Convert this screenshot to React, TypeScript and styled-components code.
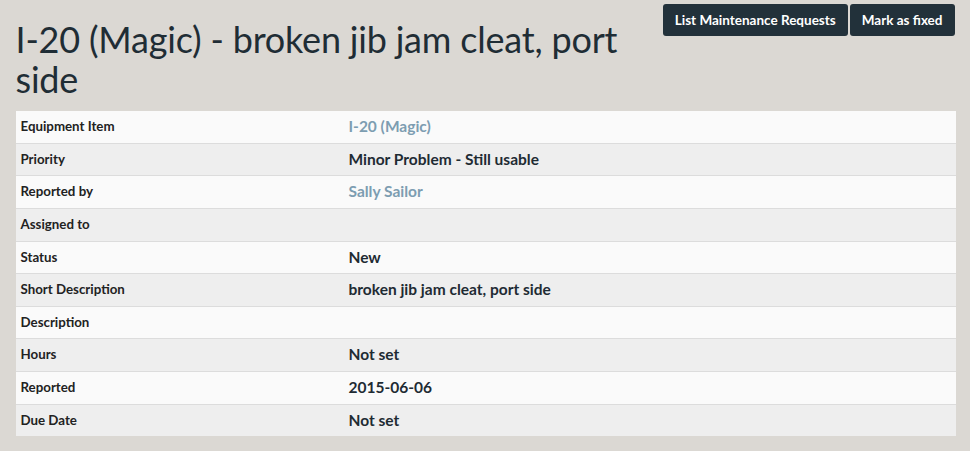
import React from 'react';
import styled, { createGlobalStyle } from 'styled-components';

const GlobalStyle = createGlobalStyle`
  html, body {
    margin: 0;
    padding: 0;
    background: #dbd8d3;
    font-family: Lato, "Liberation Sans", sans-serif;
    color: #1f2d35;
  }
`;

const Container = styled.div`
  width: 940px;
  margin: 0 auto;
  padding-left: 1px;
`;

const Header = styled.div`
  display: flex;
  justify-content: space-between;
  align-items: flex-start;
`;

const Title = styled.h1`
  margin: 20px 0 10px;
  max-width: 620px;
  font-size: 36px;
  line-height: 1.1;
  font-weight: 400;
  letter-spacing: -0.2px;
  color: #1f2d35;
`;

const Actions = styled.div`
  display: flex;
  gap: 2px;
  margin-top: 4px;
  margin-right: 1px;
`;

const Button = styled.button`
  height: 32px;
  padding: 0 12px;
  border: none;
  border-radius: 3px;
  background: #22313a;
  color: #fff;
  font-family: inherit;
  font-size: 13.5px;
  font-weight: 700;
  cursor: pointer;
`;

const Table = styled.table`
  width: 100%;
  border-collapse: collapse;
  margin-top: 2px;
`;

const Row = styled.tr<{ striped?: boolean }>`
  background: ${(props) => (props.striped ? '#eeeeee' : '#fafafa')};
  border-top: 1px solid #dcdcdc;

  &:first-child {
    border-top: none;
  }
`;

const Label = styled.th`
  width: 318px;
  padding: 8px 5px;
  line-height: 15.6px;
  text-align: left;
  vertical-align: middle;
  font-size: 13.3px;
  font-weight: 700;
  color: #222;
`;

const Value = styled.td`
  padding: 8px 5px;
  line-height: 15.6px;
  vertical-align: middle;
  font-size: 15.5px;
  font-weight: 700;
  color: #1e2b33;
`;

const Link = styled.a`
  color: #7d9db1;
  text-decoration: none;
`;

interface IField {
  label: string,
  value?: string,
  link?: boolean
}

const fields: IField[] = [
  { label: 'Equipment Item', value: 'I-20 (Magic)', link: true },
  { label: 'Priority', value: 'Minor Problem - Still usable' },
  { label: 'Reported by', value: 'Sally Sailor', link: true },
  { label: 'Assigned to' },
  { label: 'Status', value: 'New' },
  { label: 'Short Description', value: 'broken jib jam cleat, port side' },
  { label: 'Description' },
  { label: 'Hours', value: 'Not set' },
  { label: 'Reported', value: '2015-06-06' },
  { label: 'Due Date', value: 'Not set' },
];

const App = () => (
  <>
    <GlobalStyle />
    <Container>
      <Header>
        <Title>I-20 (Magic) - broken jib jam cleat, port side</Title>
        <Actions>
          <Button>List Maintenance Requests</Button>
          <Button>Mark as fixed</Button>
        </Actions>
      </Header>
      <Table>
        <tbody>
          {fields.map((field, i) => (
            <Row key={field.label} striped={i % 2 === 1}>
              <Label>{field.label}</Label>
              <Value>
                {field.link ? <Link href="#">{field.value}</Link> : field.value}
              </Value>
            </Row>
          ))}
        </tbody>
      </Table>
    </Container>
  </>
);

export default App;
